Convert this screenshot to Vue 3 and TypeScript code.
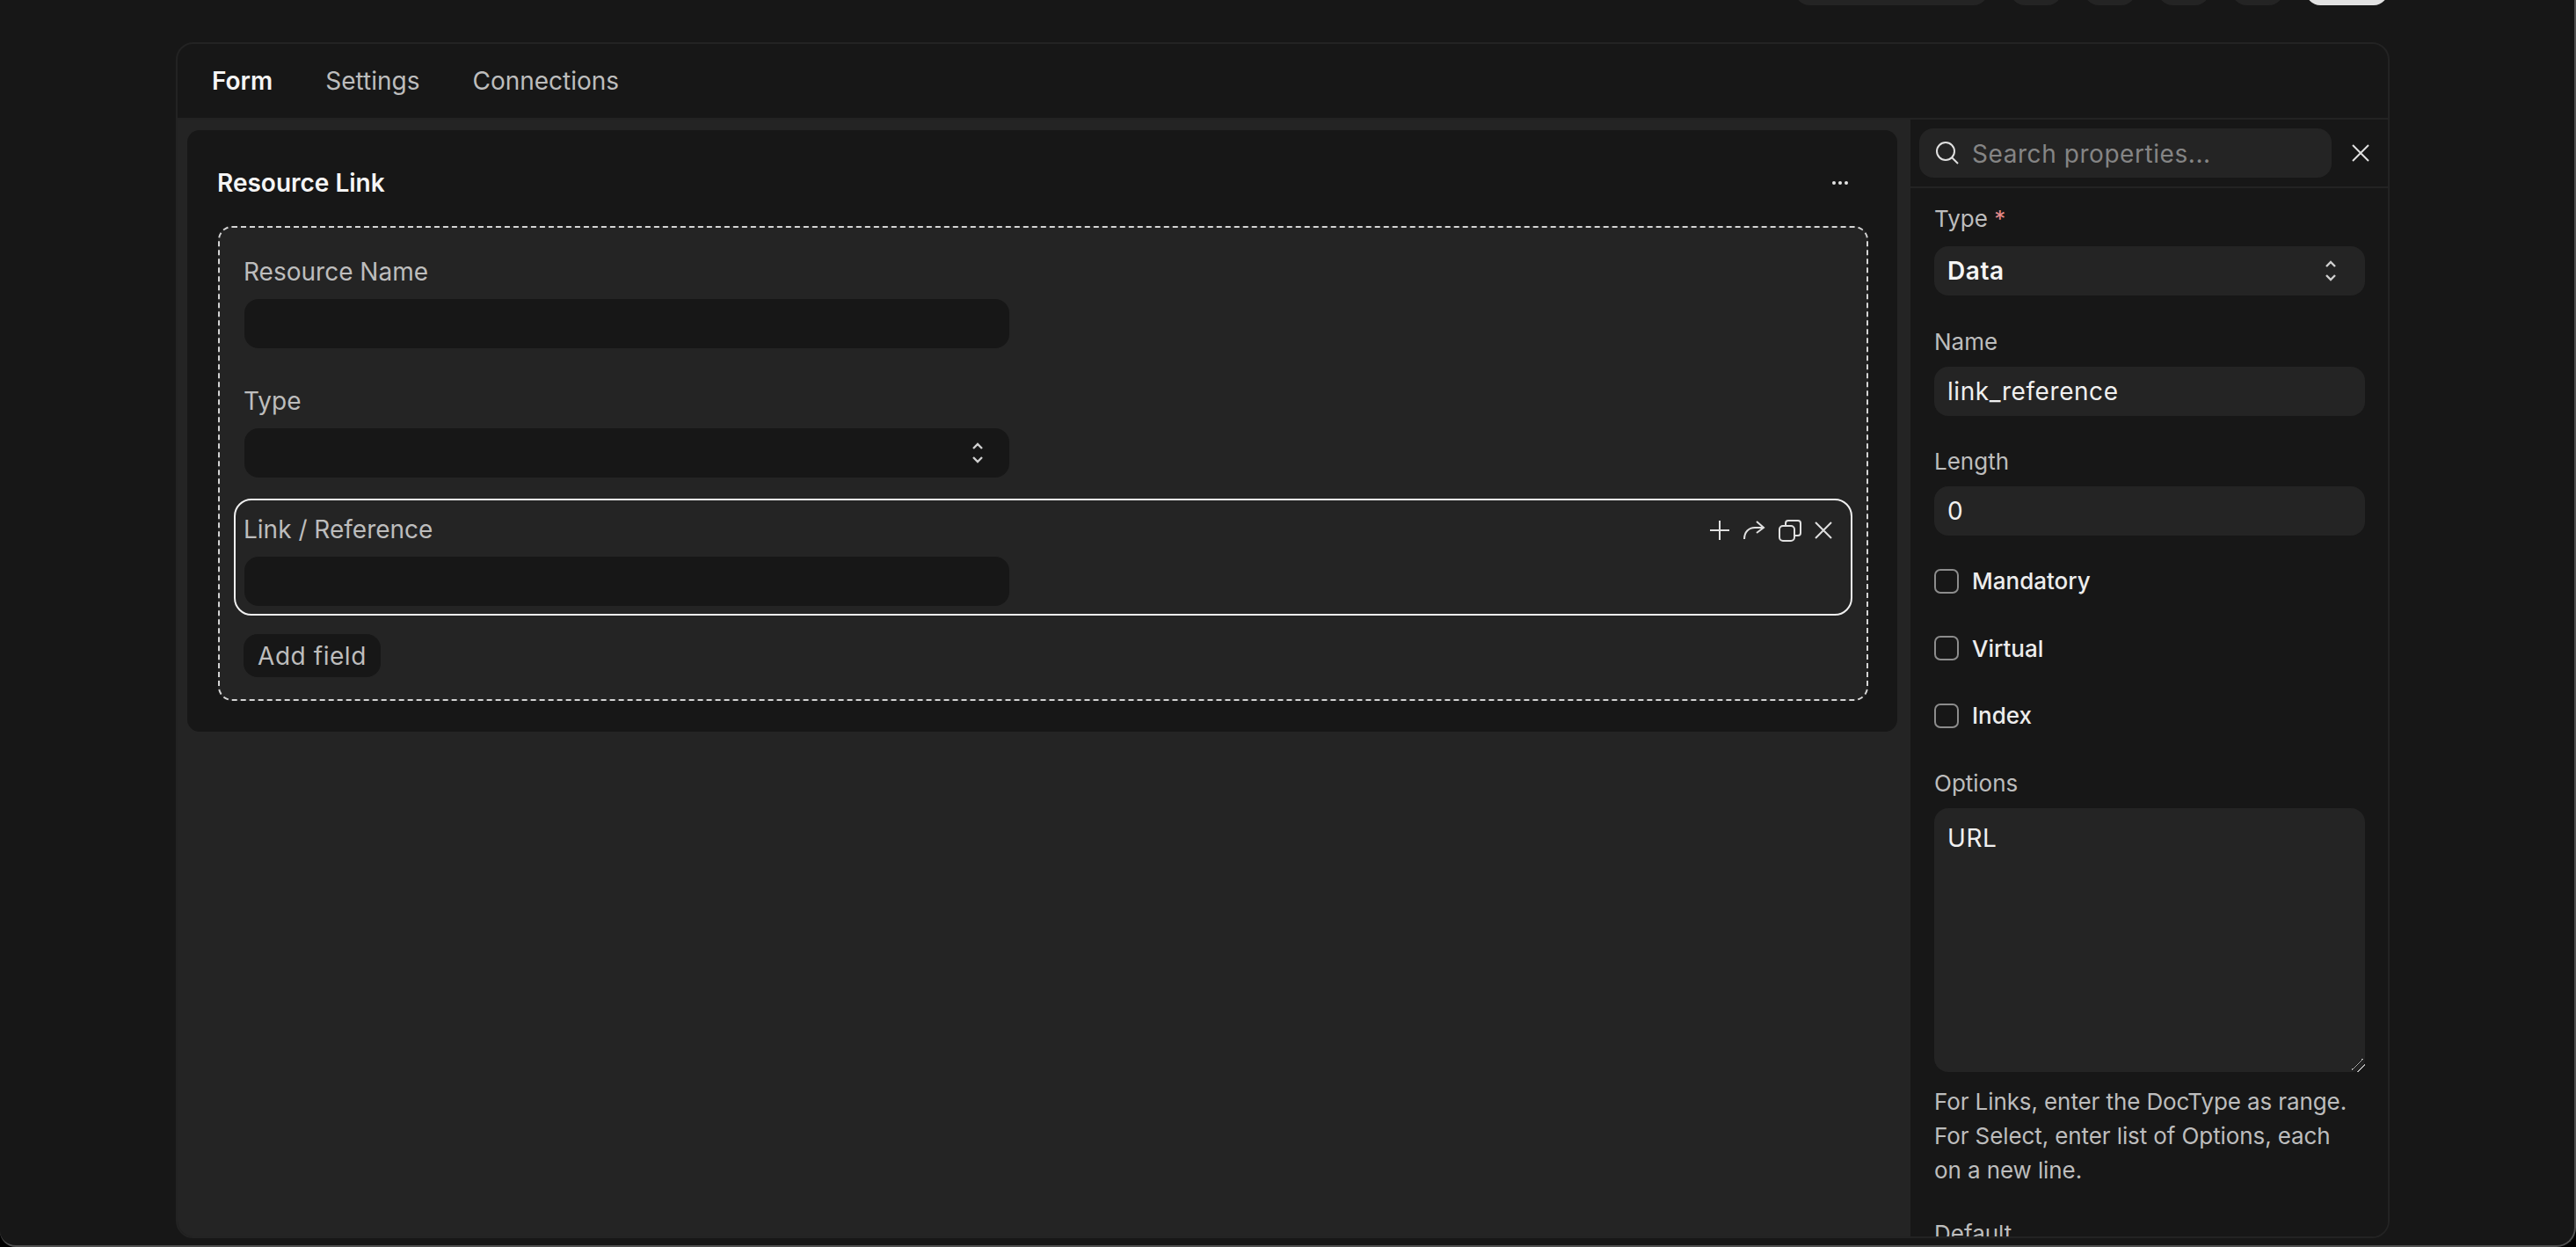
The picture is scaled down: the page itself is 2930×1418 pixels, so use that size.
<script setup lang="ts">
import { ref } from 'vue';

const tabs: string[] = ['Form', 'Settings', 'Connections'];
const activeTab = ref('Form');

const topButtons: number[] = [219, 58, 58, 58, 58];
const checks: string[] = ['Mandatory', 'Virtual', 'Index'];
</script>

<template>
  <div class="window">
    <div class="topbar">
      <span v-for="(w, i) in topButtons" :key="i" class="top-btn" :style="{ width: w + 'px' }"></span>
      <span class="top-btn primary"></span>
    </div>

    <div class="card">
      <nav class="tabs">
        <span
          v-for="tab in tabs"
          :key="tab"
          class="tab"
          :class="{ active: tab === activeTab }"
          @click="activeTab = tab"
        >{{ tab }}</span>
      </nav>

      <div class="body">
        <main class="canvas">
          <section class="form-card">
            <header class="form-head">
              <h2 class="form-title">Resource Link</h2>
              <svg class="dots" width="20" height="6" viewBox="0 0 20 6" fill="#e4e4e4">
                <circle cx="3" cy="3" r="2" />
                <circle cx="10" cy="3" r="2" />
                <circle cx="17" cy="3" r="2" />
              </svg>
            </header>

            <div class="dropzone">
              <div class="field">
                <label class="field-label">Resource Name</label>
                <div class="control"></div>
              </div>

              <div class="field">
                <label class="field-label">Type</label>
                <div class="control">
                  <svg class="caret" width="12" height="26" viewBox="0 0 12 26" fill="none" stroke="#d0d0d0" stroke-width="2.4">
                    <path d="M1 8l5-5 5 5M1 18l5 5 5-5" />
                  </svg>
                </div>
              </div>

              <div class="field selected">
                <label class="field-label">Link / Reference</label>
                <div class="control"></div>
                <div class="field-actions">
                  <svg width="24" height="24" viewBox="0 0 24 24" fill="none" stroke="#e0e0e0" stroke-width="2">
                    <path d="M12 1v22M1 12h22" />
                  </svg>
                  <svg width="26" height="24" viewBox="0 0 26 24" fill="none" stroke="#e0e0e0" stroke-width="2">
                    <path d="M2 22c0-8 5-13 12-13h10M16 2l8 7-8 6" />
                  </svg>
                  <svg width="28" height="26" viewBox="0 0 28 26" fill="none" stroke="#e0e0e0" stroke-width="2">
                    <rect x="2" y="8" width="17" height="17" rx="4" />
                    <path d="M9 8V5a3 3 0 0 1 3-3h11a3 3 0 0 1 3 3v11a3 3 0 0 1-3 3h-4" />
                  </svg>
                  <svg width="20" height="20" viewBox="0 0 20 20" fill="none" stroke="#e0e0e0" stroke-width="2">
                    <path d="M1 1l18 18M19 1L1 19" />
                  </svg>
                </div>
              </div>

              <button class="add-field">Add field</button>
            </div>
          </section>
        </main>

        <aside class="panel">
          <div class="panel-search">
            <div class="search-box">
              <svg width="28" height="28" viewBox="0 0 28 28" fill="none" stroke="#e0e0e0" stroke-width="2">
                <circle cx="12" cy="12" r="10" />
                <path d="M19 19l7 7" />
              </svg>
              <input class="search-input" placeholder="Search properties..." />
            </div>
            <svg class="panel-close" width="20" height="20" viewBox="0 0 20 20" fill="none" stroke="#e0e0e0" stroke-width="2">
              <path d="M1 1l18 18M19 1L1 19" />
            </svg>
          </div>

          <div class="props">
            <div class="prop">
              <label class="prop-label required">Type <span class="req">*</span></label>
              <div class="select-box">
                <span>Data</span>
                <svg width="12" height="26" viewBox="0 0 12 26" fill="none" stroke="#d0d0d0" stroke-width="2.4">
                  <path d="M1 8l5-5 5 5M1 18l5 5 5-5" />
                </svg>
              </div>
            </div>

            <div class="prop">
              <label class="prop-label">Name</label>
              <input class="text-input" value="link_reference" />
            </div>

            <div class="prop">
              <label class="prop-label">Length</label>
              <input class="text-input" value="0" />
            </div>

            <label v-for="c in checks" :key="c" class="check">
              <span class="check-box"></span>
              <span>{{ c }}</span>
            </label>

            <div class="prop">
              <label class="prop-label">Options</label>
              <textarea class="text-area" spellcheck="false">URL</textarea>
              <p class="help">For Links, enter the DocType as range. For Select, enter list of Options, each on a new line.</p>
            </div>

            <div class="prop">
              <label class="prop-label">Default</label>
              <input class="text-input" />
            </div>
          </div>
        </aside>
      </div>
    </div>
  </div>
</template>

<style>
html,
body {
  margin: 0;
  background: #000;
}
</style>

<style scoped>
.window {
  box-sizing: border-box;
  width: 2930px;
  height: 1418px;
  display: flex;
  flex-direction: column;
  overflow: hidden;
  background: #171717;
  border-right: 2px solid #505050;
  border-bottom: 2px solid #505050;
  border-bottom-left-radius: 18px;
  border-bottom-right-radius: 22px;
  font-family: Inter, "Liberation Sans", sans-serif;
  font-size: 28px;
}

.topbar {
  flex: none;
  height: 6px;
  display: flex;
  justify-content: flex-end;
  align-items: flex-end;
  gap: 26px;
  padding-right: 212px;
  overflow: hidden;
}

.top-btn {
  flex: none;
  height: 56px;
  border-radius: 16px;
  background: #242424;
}

.top-btn.primary {
  width: 93px;
  background: #e2e2e2;
}

.card {
  flex: 1;
  min-height: 0;
  display: flex;
  flex-direction: column;
  margin: 42px 210px 8px 200px;
  border: 2px solid #232323;
  border-radius: 20px;
  overflow: hidden;
}

.tabs {
  flex: none;
  height: 84px;
  display: flex;
  align-items: center;
  gap: 60px;
  padding-left: 39px;
  border-bottom: 2px solid #232323;
}

.tab {
  color: #bdbdbd;
  cursor: pointer;
}

.tab.active {
  color: #f5f5f5;
  font-weight: 600;
}

.body {
  flex: 1;
  min-height: 0;
  display: flex;
}

.canvas {
  flex: 1;
  min-width: 0;
  background: #242424;
  padding: 12px 15px 0 11px;
}

.form-card {
  background: #171717;
  border-radius: 14px;
  padding: 41px 33px 35px 35px;
}

.form-head {
  display: flex;
  justify-content: space-between;
  align-items: center;
  height: 38px;
  margin-bottom: 30px;
  padding-right: 22px;
}

.form-title {
  margin: 0 0 0 -1px;
  font-size: 28px;
  font-weight: 600;
  color: #f5f5f5;
}

.dropzone {
  display: flex;
  flex-direction: column;
  align-items: flex-start;
  gap: 14px;
  padding: 15px 16px 25px;
  border: 2px dashed #d4d4d4;
  border-radius: 16px;
  background: #242424;
}

.field {
  position: relative;
  box-sizing: border-box;
  width: 100%;
  height: 133px;
  padding: 15px 10px 9px;
  border: 2px solid transparent;
  border-radius: 20px;
}

.field.selected {
  margin-top: -1px;
  margin-bottom: 7px;
  border-color: #f0f0f0;
}

.field-label {
  display: block;
  height: 36px;
  line-height: 36px;
  margin: 0 0 13px -1px;
  color: #bdbdbd;
  font-size: 28px;
}

.control {
  position: relative;
  width: 870px;
  height: 56px;
  border-radius: 16px;
  background: #171717;
}

.caret {
  position: absolute;
  top: 15px;
  right: 30px;
}

.field-actions {
  position: absolute;
  top: 21px;
  right: 21px;
  display: flex;
  align-items: center;
  gap: 14px;
}

.add-field {
  height: 49px;
  margin-left: 11px;
  padding: 0 16px;
  border: none;
  border-radius: 16px;
  background: #171717;
  color: #bdbdbd;
  font: inherit;
  letter-spacing: 0.02em;
}

.panel {
  flex: none;
  width: 543px;
  display: flex;
  flex-direction: column;
  background: #171717;
  overflow: hidden;
}

.panel-search {
  flex: none;
  box-sizing: border-box;
  height: 78px;
  display: flex;
  align-items: center;
  gap: 23px;
  padding: 0 0 0 10px;
  border-bottom: 2px solid #232323;
}

.search-box {
  width: 469px;
  height: 56px;
  display: flex;
  align-items: center;
  gap: 14px;
  box-sizing: border-box;
  padding-left: 18px;
  border-radius: 16px;
  background: #242424;
}

.search-input {
  flex: 1;
  min-width: 0;
  padding: 2px 0 0;
  border: none;
  outline: none;
  background: transparent;
  font: inherit;
  letter-spacing: 0.02em;
  color: #f0f0f0;
}

.search-input::placeholder {
  color: #858585;
}

.props {
  padding: 20px 26px 0 27px;
}

.prop {
  margin-bottom: 37.5px;
}

.prop-label {
  display: block;
  height: 30px;
  line-height: 30px;
  margin-bottom: 13px;
  color: #bdbdbd;
  font-size: 26px;
}

.prop-label.required {
  margin-bottom: 16px;
}

.req {
  color: #e58a8a;
}

.select-box {
  box-sizing: border-box;
  height: 56px;
  display: flex;
  align-items: center;
  justify-content: space-between;
  padding: 0 33px 0 15px;
  border-radius: 16px;
  background: #242424;
  color: #f5f5f5;
  font-weight: 600;
  letter-spacing: 0.02em;
}

.text-input,
.text-area {
  display: block;
  box-sizing: border-box;
  width: 100%;
  padding: 0 15px;
  border: none;
  outline: none;
  border-radius: 16px;
  background: #242424;
  color: #f0f0f0;
  font: inherit;
  letter-spacing: 0.02em;
}

.text-input {
  height: 56px;
}

.text-area {
  height: 300px;
  padding-top: 16px;
  resize: vertical;
  line-height: 1.3;
}

.text-area::-webkit-resizer {
  background: linear-gradient(
    135deg,
    transparent 37%,
    #111 37% 40%,
    #b4b4b4 40% 46%,
    #111 46% 49%,
    transparent 49% 66%,
    #111 66% 69%,
    #b4b4b4 69% 75%,
    #111 75% 78%,
    transparent 78%
  );
}

.check {
  display: flex;
  align-items: center;
  gap: 15px;
  height: 28px;
  margin-bottom: 48.5px;
  color: #ededed;
  font-size: 26px;
  font-weight: 500;
}

.check-box {
  flex: none;
  box-sizing: border-box;
  width: 28px;
  height: 28px;
  border: 2px solid #8c8c8c;
  border-radius: 7px;
}

.help {
  margin: 14px 0 0;
  padding-right: 16px;
  color: #bdbdbd;
  font-size: 26px;
  line-height: 39px;
  letter-spacing: -0.1px;
}
</style>
